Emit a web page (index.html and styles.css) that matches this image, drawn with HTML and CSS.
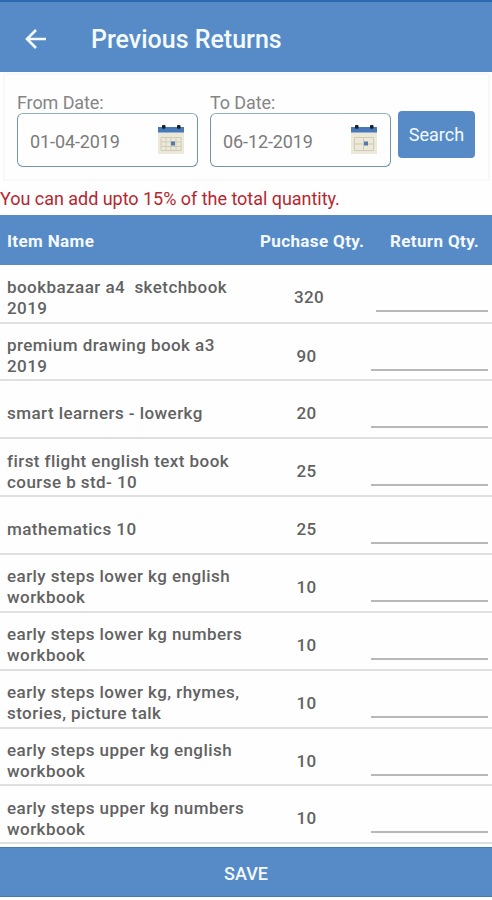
FILE: index.html
```html
<!DOCTYPE html>
<html lang="en">
  <head>
    <meta charset="utf-8">
    <meta name="viewport" content="width=device-width, initial-scale=1"/>
    <title>Previous Returns</title>
    <link rel="stylesheet" href="styles.css">
  </head>
  <body>
    <div class="header">
      <svg class="back" viewBox="0 0 22 20">
        <path d="M21 10H2.500M11 1L2 10l9 9"/>
      </svg>
      <h1>Previous Returns</h1>
    </div>

    <div class="search-card">
      <div class="field">
        <label>From Date:</label>
        <div class="date-box">
          <span>01-04-2019</span>
          <svg class="calendar" viewBox="0 0 28 30">
            <rect x="1" y="6" width="26" height="23" fill="#ece9d8"/>
            <path d="M4 12.500h20v13H4zM4 17h20M4 21.500h20M9 12.500v13M14 12.500v13M19 12.500v13" fill="none" stroke="#cfcbb9" stroke-width="1"/>
            <rect x="1" y="2" width="26" height="5.500" fill="#4779b9"/>
            <rect x="5" y="0" width="3.500" height="3.800" rx="1" fill="#17202c"/>
            <rect x="20" y="0" width="3.500" height="3.800" rx="1" fill="#17202c"/>
            <rect x="14" y="16.500" width="4" height="4" fill="#5578a8"/>
          </svg>
        </div>
      </div>
      <div class="field">
        <label>To Date:</label>
        <div class="date-box">
          <span>06-12-2019</span>
          <svg class="calendar" viewBox="0 0 28 30">
            <rect x="1" y="6" width="26" height="23" fill="#ece9d8"/>
            <path d="M4.500 12.500h19v13h-19zM4.500 19h19M13.500 12.500v13" fill="none" stroke="#cfcbb9" stroke-width="1"/>
            <rect x="1" y="2" width="26" height="5.500" fill="#4779b9"/>
            <rect x="5" y="0" width="3.500" height="3.800" rx="1" fill="#17202c"/>
            <rect x="20" y="0" width="3.500" height="3.800" rx="1" fill="#17202c"/>
            <rect x="14" y="16.500" width="4" height="4" fill="#5578a8"/>
          </svg>
        </div>
      </div>
      <button class="search-button">Search</button>
    </div>

    <p class="note">You can add upto 15% of the total quantity.</p>

    <div class="table-header">
      <div class="name">Item Name</div>
      <div class="purchase">Puchase Qty.</div>
      <div class="return">Return Qty.</div>
    </div>

    <div class="items">
      <div class="row">
        <div class="name">bookbazaar a4&nbsp; sketchbook<br>2019</div>
        <div class="qty wide">320</div>
        <div class="entry"></div>
      </div>
      <div class="row">
        <div class="name">premium drawing book a3<br>2019</div>
        <div class="qty">90</div>
        <div class="entry"></div>
      </div>
      <div class="row">
        <div class="name">smart learners - lowerkg</div>
        <div class="qty">20</div>
        <div class="entry"></div>
      </div>
      <div class="row">
        <div class="name">first flight english text book<br>course b std- 10</div>
        <div class="qty">25</div>
        <div class="entry"></div>
      </div>
      <div class="row">
        <div class="name">mathematics 10</div>
        <div class="qty">25</div>
        <div class="entry"></div>
      </div>
      <div class="row">
        <div class="name">early steps lower kg english<br>workbook</div>
        <div class="qty">10</div>
        <div class="entry"></div>
      </div>
      <div class="row">
        <div class="name">early steps lower kg numbers<br>workbook</div>
        <div class="qty">10</div>
        <div class="entry"></div>
      </div>
      <div class="row">
        <div class="name">early steps lower kg, rhymes,<br>stories, picture talk</div>
        <div class="qty">10</div>
        <div class="entry"></div>
      </div>
      <div class="row">
        <div class="name">early steps upper kg english<br>workbook</div>
        <div class="qty">10</div>
        <div class="entry"></div>
      </div>
      <div class="row">
        <div class="name">early steps upper kg numbers<br>workbook</div>
        <div class="qty">10</div>
        <div class="entry"></div>
      </div>
    </div>

    <button class="save-button">SAVE</button>
  </body>
</html>
```
FILE: styles.css
```css
* {
  box-sizing: border-box;
}

body {
  margin: 0;
  height: 900px;
  overflow: hidden;
  background-color: #fefefe;
  color: #626262;
  font-family: Roboto, sans-serif;
}

button {
  border: none;
  padding: 0;
  font-family: inherit;
  color: #f4f9ff;
  background-color: #578bc7;
}

.header {
  display: flex;
  align-items: center;
  height: 72px;
  padding: 3px 0 0 25px;
  border-top: 2px solid #2e69b1;
  background-color: #578bc7;
}

.back {
  width: 22px;
  height: 20px;
  margin-right: 44px;
  fill: none;
  stroke: #f4fbff;
  stroke-width: 2.6;
}

h1 {
  margin: 0;
  padding-top: 1px;
  font-size: 25px;
  font-weight: 500;
  color: #f4fbff;
}

.search-card {
  display: flex;
  height: 108px;
  margin: 1px 2px 0 3px;
  padding: 19px 0 0 12px;
  border: 2px solid #f8f8f8;
}

.field {
  width: 181px;
  margin-right: 12px;
}

label {
  display: block;
  height: 19px;
  line-height: 18px;
  font-size: 18px;
  letter-spacing: -0.1px;
  color: #858585;
}

.date-box {
  display: flex;
  justify-content: space-between;
  align-items: center;
  height: 54px;
  padding: 2px 12px 0;
  border: 1.5px solid #7095ad;
  border-top-color: #8fb3bf;
  border-radius: 6px;
  font-size: 18px;
  letter-spacing: -0.1px;
  color: #7b7b7b;
}

.calendar {
  width: 28px;
  height: 30px;
  margin-top: -3px;
}

.search-button {
  width: 77px;
  height: 47px;
  margin-top: 17px;
  margin-left: -5px;
  padding-bottom: 1px;
  border-radius: 4px;
  font-size: 18px;
}

.note {
  height: 34px;
  margin: 0;
  line-height: 35px;
  font-size: 18px;
  letter-spacing: -0.03px;
  color: #b7262e;
  white-space: nowrap;
}

.table-header {
  display: flex;
  align-items: center;
  height: 50px;
  padding: 2px 0 0 7px;
  background-color: #578bc7;
  font-size: 17px;
  font-weight: 700;
  letter-spacing: 0.37px;
  color: #f4f9ff;
}

.name {
  width: 253px;
  white-space: nowrap;
}

.purchase {
  width: 130px;
}

.row {
  display: flex;
  align-items: center;
  height: 57.86px;
  padding: 9px 4px 0 7px;
  border-bottom: 2px solid #e0e0e0;
  line-height: 21px;
  font-size: 17px;
  font-weight: 500;
}

.row:first-child {
  height: 58.6px;
}

.row .name {
  letter-spacing: 0.44px;
}

.qty {
  width: 93px;
  text-align: center;
  letter-spacing: 0.3px;
}

.qty.wide {
  width: 98px;
}

.entry {
  flex: 1;
  height: 29px;
  margin-left: 18px;
  border-bottom: 2px solid #b8b8b8;
}

.save-button {
  display: block;
  width: 100%;
  height: 50px;
  margin-top: 3px;
  padding-top: 2px;
  border-top: 1px solid #427bb9;
  border-bottom: 1px solid #427bb9;
  font-size: 18px;
  font-weight: 500;
}
```
